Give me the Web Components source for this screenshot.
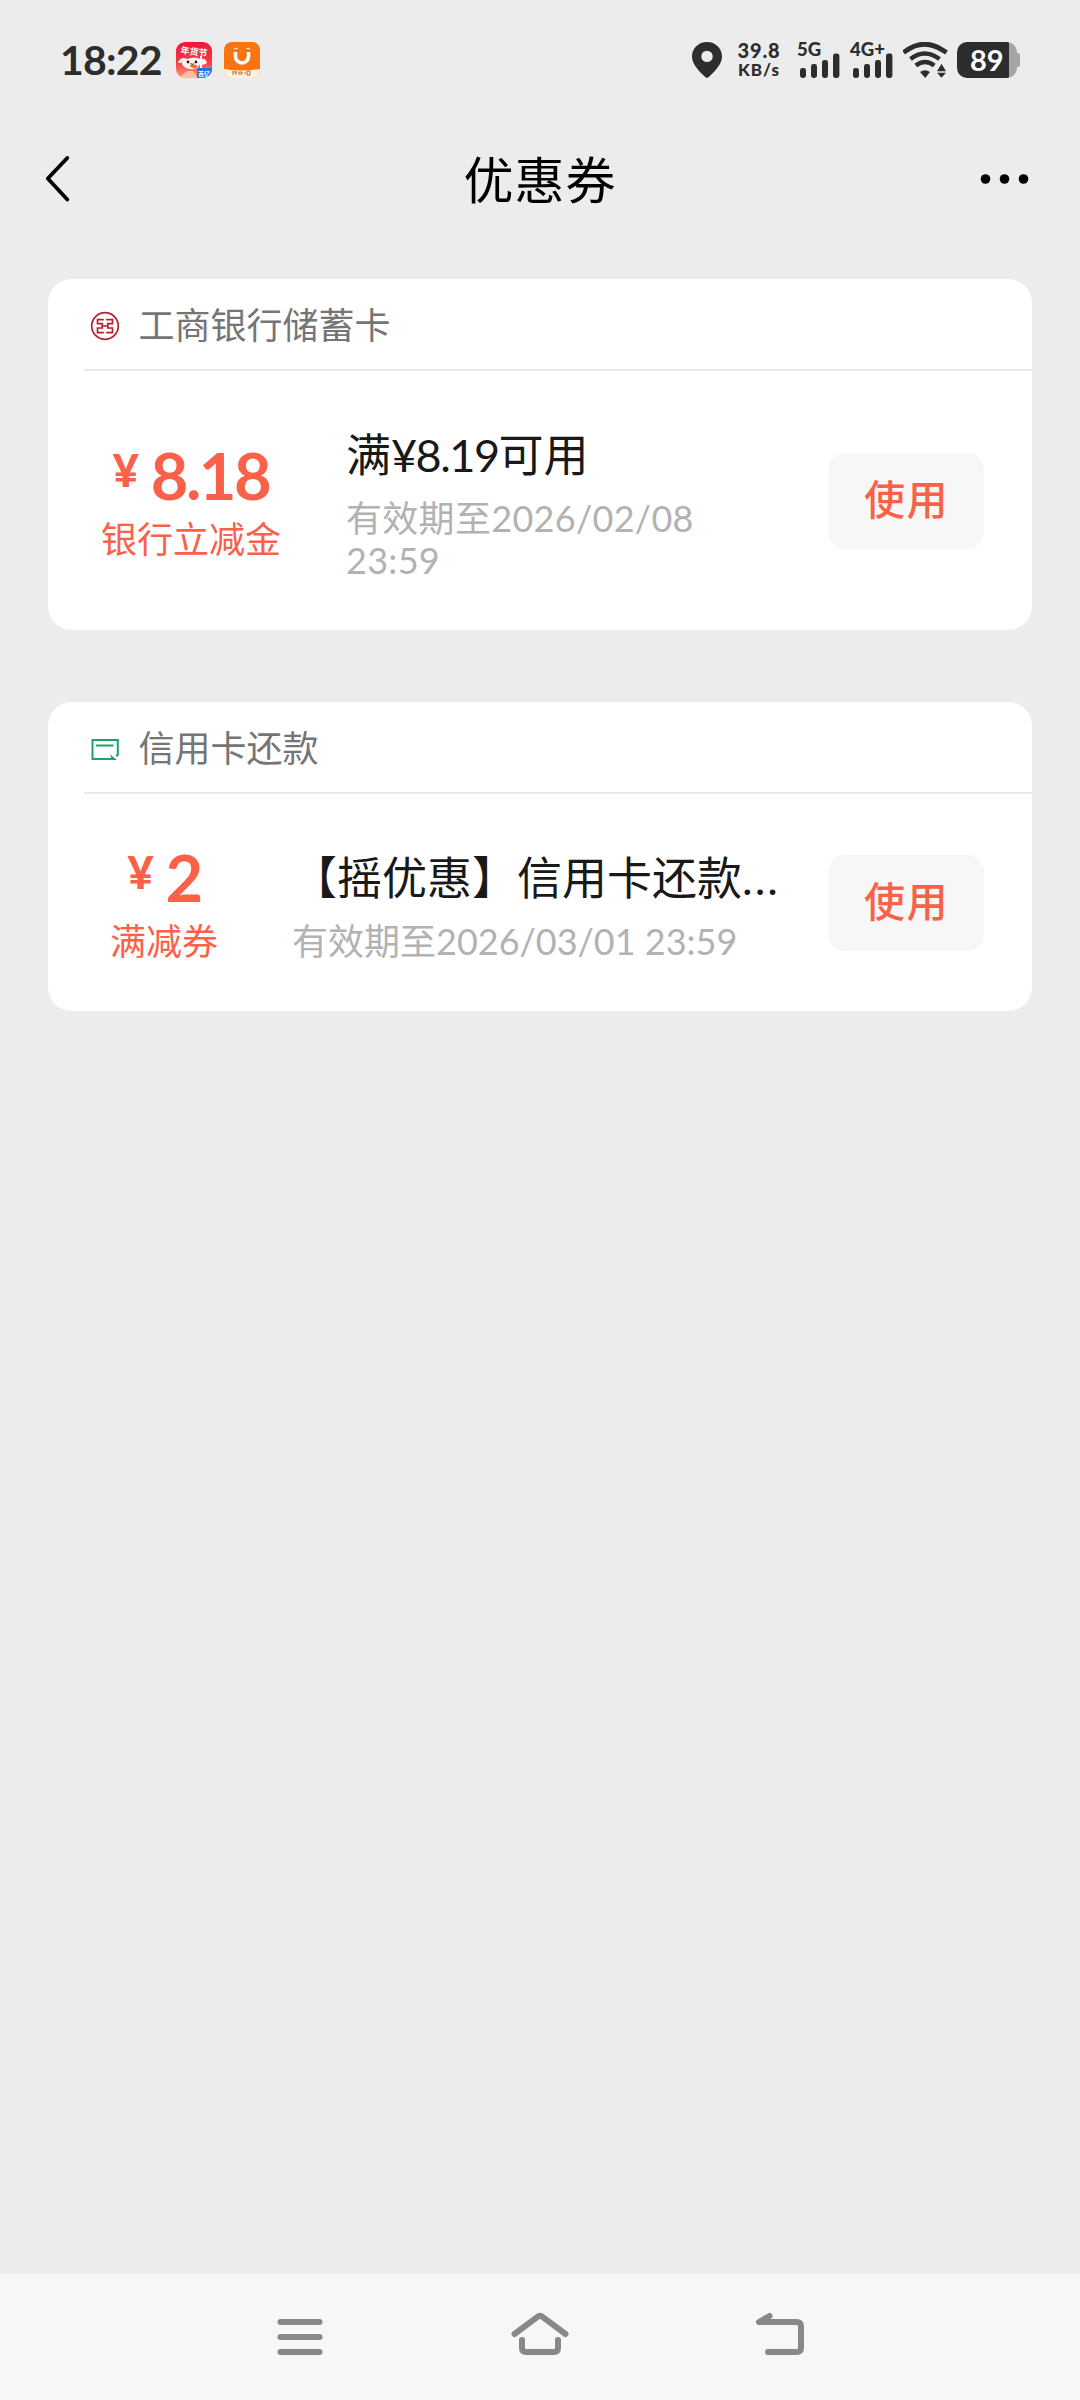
<!DOCTYPE html>
<html lang="zh-CN">
<head>
<meta charset="utf-8">
<title>优惠券</title>
<style>
html,body{margin:0;height:100%;background:#ececec}
body{font-family:Lato,"Noto Sans CJK SC",sans-serif;color:#191919}
</style>
</head>
<body>
<coupon-page></coupon-page>
<script>
const define = (name, html) => {
  const t = document.createElement('template');
  t.innerHTML = html;
  customElements.define(name, class extends HTMLElement {
    constructor() {
      super();
      this.attachShadow({mode: 'open'}).appendChild(t.content.cloneNode(true));
    }
  });
};

define('signal-bars', `
<style>
:host{display:flex;flex-direction:column;width:42px;height:36px;color:#2d2d2d}
.n{font:900 18.5px/14px Lato,sans-serif;height:11px;white-space:nowrap;letter-spacing:0;margin-left:-2px}
svg{display:block;overflow:visible}
</style>
<div class="n"><slot></slot></div>
<svg width="42" height="25" fill="currentColor"><rect x="1" y="15" width="6" height="10" rx="2.4"/><rect x="12" y="11" width="6" height="14" rx="2.4"/><rect x="23" y="7" width="6" height="18" rx="2.4"/><rect x="34" y="0.5" width="6.4" height="24.5" rx="2.4"/></svg>`);

define('battery-level', `
<style>
:host{display:flex;align-items:center;width:63px;height:36px}
.b{width:60px;height:36px;border-radius:10px;background:linear-gradient(90deg,#2d2d2d 52.5px,#a5a5a5 52.5px);color:#fff;font:700 29px/36px Lato,sans-serif;text-indent:13px}
i{width:3px;height:14px;background:#a5a5a5;border-radius:0 2px 2px 0}
</style>
<div class="b"><slot></slot></div><i></i>`);

define('status-bar', `
<style>
:host{display:flex;height:120px;padding:0 60px;box-sizing:border-box;align-items:center;color:#2d2d2d}
.time{font:700 41px/48px Lato,sans-serif;width:116px;letter-spacing:-.8px;white-space:nowrap}
svg{display:block;flex:none}
.app{margin-right:11.500px}
.rate{width:48px;margin-left:13px;text-align:center;font:900 20px/20px Lato,sans-serif;letter-spacing:.8px;white-space:nowrap}
.rate div+div{font-size:17px;letter-spacing:1px}
.sp{flex:1}
</style>
<div class="time">18:22</div>
<svg class="app" width="36" height="36" viewBox="0 0 36 36">
  <defs><clipPath id="c"><rect width="36" height="36" rx="9"/></clipPath>
  <linearGradient id="g" x1="0" y1="0" x2="0" y2="1"><stop offset="0" stop-color="#ee1738"/><stop offset=".55" stop-color="#f23b48"/><stop offset="1" stop-color="#ff9a78"/></linearGradient></defs>
  <g clip-path="url(#c)"><rect width="36" height="36" fill="url(#g)"/>
  <path d="M2 20q4-6 9-3 7-3 14 0 5-1 6 4-4 3-7 1-3 8-14 4-5-3-4-6-2 2-4 0z" fill="#fff1ea"/>
  <path d="M5 36q4-9 12-7l5 7z" fill="#ffc1a2"/><path d="M13 24q5-3 9 0l-3 3z" fill="#ed6b45"/>
  <circle cx="12" cy="20" r="1.4" fill="#222"/><circle cx="20" cy="20" r="1.4" fill="#222"/><path d="M14.5 21.5q2 2 3.5 0" stroke="#222" fill="none"/>
  <path d="M25 14v12M21.500 19h7" stroke="#fff" stroke-width="2"/>
  <text x="18" y="13" text-anchor="middle" transform="rotate(7 18 10)" font-family="Noto Sans CJK SC" font-weight="700" font-size="9" fill="#fff">年货节</text>
  <rect x="21" y="26" width="15" height="10" fill="#2676e2"/><text x="28" y="33.500" text-anchor="middle" font-family="Noto Sans CJK SC" font-weight="700" font-size="6" fill="#fff">百亿</text></g>
</svg>
<svg class="app" width="36" height="36" viewBox="0 0 36 36">
  <defs><clipPath id="d"><rect width="36" height="36" rx="8"/></clipPath></defs>
  <g clip-path="url(#d)"><rect width="36" height="36" fill="#fa7410"/><path d="M0 27q18 3 36 0v9H0z" fill="#fff3df"/>
  <path d="M11.500 10v4.500a6.500 6.500 0 0 0 13 0V10" fill="none" stroke="#fff" stroke-width="3.600"/><path d="M10 7.500q1.500-2 3.500-.8M22.500 6.700q2-1.200 3.500.8" fill="none" stroke="#fff" stroke-width="1.200"/>
  <path d="M9 29v4M9 30h4M12 29v4M15 30h3v2h-3zM20 31h2M23 29v4h3v-4z" fill="none" stroke="#b96835" stroke-width="1"/></g>
</svg>
<div class="sp"></div>
<svg width="30" height="36" viewBox="0 0 30 36" fill="#2d2d2d"><path fill-rule="evenodd" d="M15 0C6.500 0 0 6.300 0 14.500c0 6.800 5.200 13 13.200 20.600q1.800 1.600 3.600 0C24.800 27.500 30 21.300 30 14.500 30 6.300 23.500 0 15 0zm0 8.700a5.700 5.700 0 1 1 0 11.400 5.700 5.700 0 0 1 0-11.400z"/></svg>
<div class="rate"><div>39.8</div><div>KB/s</div></div>
<signal-bars style="margin-left:16px">5G</signal-bars>
<signal-bars style="margin-left:11px">4G+</signal-bars>
<svg style="margin-left:9px" width="46" height="36" viewBox="0 0 46 36" fill="none" stroke="#2d2d2d"><path d="M2.500 9.200q18.500-14 39 0" stroke-width="4.800" stroke-linecap="square" stroke-linejoin="round"/><path d="M7.500 17q14-11 29 0" stroke-width="4.600"/><path d="M12.800 23.500q9.200-7 18.500 0" stroke-width="4.600"/><path d="M17 30q5-3.500 10 0L22.300 36z" fill="#2d2d2d" stroke="none"/><path d="M34 29.500l4.500-7.500 4.500 7.500zM34 31h9l-4.500 5z" fill="#2d2d2d" stroke="none" transform="translate(0 -.3)"/></svg>
<battery-level style="margin-left:8px">89</battery-level>`);

define('nav-header', `
<style>
:host{display:flex;height:117px;padding:0 46px 0 44px;align-items:center;justify-content:space-between;color:#000}
svg{display:block}
h1{margin:0;font-weight:400;font-size:50px;line-height:60px;height:60px;letter-spacing:1px;padding:3px 0 0 6px}
</style>
<svg width="50" height="48" viewBox="0 0 50 48" fill="none" stroke="#000" stroke-width="3.800" stroke-linecap="round" stroke-linejoin="round"><path d="M23.300 3L3.800 23.500l19.500 21"/></svg>
<h1><slot></slot></h1>
<svg width="54" height="12" viewBox="0 0 54 12"><circle cx="5.500" cy="6" r="4.800"/><circle cx="24.500" cy="6" r="4.800"/><circle cx="43.500" cy="6" r="4.800"/></svg>`);

define('icbc-logo', `
<style>:host{display:block;width:30px;height:30px}svg{display:block}</style>
<svg width="30" height="30" viewBox="0 0 30 30" fill="none" stroke="#b3212d"><circle cx="15" cy="15" r="13.300" stroke-width="1.700"/><path d="M13.800 8.700H7.500v4h4.700v2.300h5.600v-2.300h4.700v-4h-6.300M7.500 16.200v5.400h6.300M22.500 16.200v5.400h-6.300M7.500 17h4.700v-2M22.500 17h-4.700v-2" stroke-width="1.700"/></svg>`);

define('card-repay-icon', `
<style>:host{display:block;width:30px;height:30px}svg{display:block}</style>
<svg width="30" height="30" viewBox="0 0 30 30" fill="none" stroke="#21a067" stroke-width="2"><path d="M22 25H2.500V6h25.300v14.800l-1.500 1.500"/><path d="M6 11.500h17.500"/><path d="M20 20.200l6.800 5.800h-5z" fill="#21a067" stroke="none"/></svg>`);

define('use-button', `
<style>
:host{display:flex;width:156px;height:96px;border-radius:17px;background:#f7f7f7;align-items:center;justify-content:center;flex:none}
button{all:unset;color:#fa6148;font-size:41px;font-weight:500;line-height:50px;letter-spacing:1.500px;text-indent:1px;padding-bottom:2px}
</style>
<button><slot></slot></button>`);

define('coupon-card', `
<style>
:host{display:flex;flex-direction:column;background:#fff;border-radius:24px;overflow:hidden}
header{display:flex;align-items:center;height:92px;margin-left:36px;padding-left:6px;gap:18.500px;border-bottom:2px solid #e9e9e9;box-sizing:border-box;color:#757575;font-size:36px;line-height:42px}
header ::slotted([slot=icon]){margin-top:4px}
header ::slotted([slot=bank]){margin-top:2px}
section{flex:1;display:flex;align-items:center;padding-right:48px}
.amt{width:var(--amt,286px);display:flex;flex-direction:column;align-items:center;color:#fa6148;flex:none;gap:11px;padding-top:2px}
.num{display:flex;align-items:flex-start;height:64px;line-height:64px;font-size:65px;font-weight:700;letter-spacing:-2.500px;white-space:nowrap;gap:13px}
.num b{font-size:45px;line-height:54px;width:25px}
.lab{font-size:36px;line-height:42px}
.txt{flex:1;min-width:0;margin-left:12px;margin-top:var(--shift,5px)}
.ttl{font-size:45px;line-height:60px;height:60px;white-space:nowrap;margin-bottom:12px}
.date{font-size:36px;line-height:42px;color:#b2b2b2;width:var(--datew,370px);letter-spacing:var(--track,.3px)}
</style>
<header><slot name="icon"></slot><slot name="bank"></slot></header>
<section>
<div class="amt"><div class="num"><b>¥</b><slot name="amount"></slot></div><div class="lab"><slot name="kind"></slot></div></div>
<div class="txt"><div class="ttl"><slot name="title"></slot></div><div class="date"><slot name="date"></slot></div></div>
<use-button>使用</use-button>
</section>`);

define('system-nav', `
<style>
:host{display:flex;height:126px;background:#f7f7f7;align-items:center;justify-content:center;gap:180px}
svg{display:block;overflow:visible}
</style>
<svg width="60" height="60" viewBox="270 2307 60 60" fill="none" stroke="#888" stroke-width="6" stroke-linecap="round"><path d="M280.500 2322h39M280.500 2337h39M280.500 2352h39"/></svg>
<svg width="60" height="60" viewBox="510 2307 60 60" fill="none" stroke="#888" stroke-width="6" stroke-linecap="round" stroke-linejoin="round"><path d="M514.500 2334l24-17.800q1.500-1 3 0l24 17.800M522 2340v8q0 4 4 4h28q4 0 4-4v-8"/></svg>
<svg width="60" height="60" viewBox="750 2307 60 60" fill="none" stroke="#888" stroke-width="6" stroke-linecap="round" stroke-linejoin="round"><path d="M769.500 2316l-10.500 6h37.500q4.500 0 4.500 4.500v21q0 4.500-4.500 4.500H768"/></svg>`);

define('coupon-page', `
<style>
:host{display:flex;flex-direction:column;height:2400px;width:1080px}
main{flex:1;display:flex;flex-direction:column;padding:42px 48px 0}
</style>
<status-bar></status-bar>
<nav-header>优惠券</nav-header>
<main>
<coupon-card style="height:351px;margin-bottom:72px">
<icbc-logo slot="icon"></icbc-logo><span slot="bank">工商银行储蓄卡</span>
<span slot="amount">8.18</span><span slot="kind">银行立减金</span>
<span slot="title">满<span style="letter-spacing:-1.5px">¥8.19</span>可用</span><span slot="date">有效期至2026/02/08 23:59</span>
</coupon-card>
<coupon-card style="height:309px;--amt:232px;--shift:5px;--datew:480px;--track:0">
<card-repay-icon slot="icon"></card-repay-icon><span slot="bank">信用卡还款</span>
<span slot="amount">2</span><span slot="kind">满减券</span>
<span slot="title">【摇优惠】信用卡还款<span style="letter-spacing:2px">...</span></span><span slot="date">有效期至2026/03/01 23:59</span>
</coupon-card>
</main>
<system-nav></system-nav>`);
</script>
</body>
</html>
